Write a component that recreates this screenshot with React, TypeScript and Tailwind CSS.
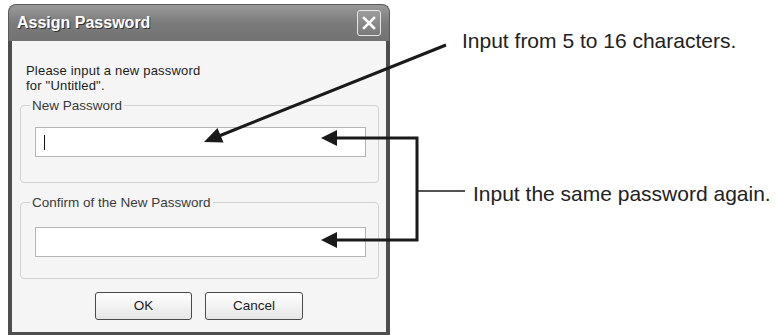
import React from 'react';

const font = { fontFamily: '"Liberation Sans", Arial, sans-serif' };

function GroupBox({ label, inputTop, bottomPad, showCursor, className }: { label: string; inputTop: string; bottomPad: string; showCursor?: boolean; className?: string }) {
  return (
    <div className={`rounded-[4px] border border-[#d2d2d2] pl-[14px] pr-[12px] ${bottomPad} ${className ?? ''}`}>
      <div className="-mt-[8px] ml-[-5px] h-[16px] w-fit bg-[#f5f5f5] px-[2px] text-[13.5px] leading-[16px] text-[#3a3a3a]">
        {label}
      </div>
      <div className={`${inputTop} flex h-[30px] items-center border border-[#b4b4b4] bg-white pl-[8px]`}>
        {showCursor && <div className="h-[15px] w-[1px] bg-[#111]" />}
      </div>
    </div>
  );
}

function Dialog() {
  return (
    <div className="ml-[8px] mt-[4px] flex h-[331px] w-[382px] flex-col">
      {/* Title bar */}
      <div className="flex h-[37px] items-center justify-between rounded-t-[8px] border-x border-t border-[#5a5a5a] bg-gradient-to-b from-[#9a9a9a] via-[#7b7b7b] to-[#727272] pl-[8px] pr-[8px]">
        <span className="text-[16px] font-bold text-white [text-shadow:1px_1px_0_#333]" style={font}>
          Assign Password
        </span>
        <div className="flex h-[26px] w-[24px] items-center justify-center rounded-[3px] border border-[#e6e6e6] bg-gradient-to-b from-[#9c9c9c] to-[#7a7a7a]">
          <svg width="14" height="14" viewBox="0 0 14 14">
            <path d="M2 2 L12 12 M12 2 L2 12" stroke="#fff" strokeWidth="2.6" strokeLinecap="square" />
          </svg>
        </div>
      </div>

      {/* Body */}
      <div className="flex flex-1 flex-col border-x-[4px] border-b-[3px] border-[#4e4e4e] bg-[#f5f5f5] px-[8px] pt-[22px]" style={font}>
        <p className="pl-[6px] text-[13px] leading-[15px] tracking-[0.2px] text-[#1c1c1c]">
          Please input a new password
          <br />
          for "Untitled".
        </p>

        <GroupBox label="New Password" inputTop="mt-[13px]" bottomPad="pb-[25px]" showCursor className="mt-[12px] mr-[-1px]" />
        <GroupBox label="Confirm of the New Password" inputTop="mt-[16px]" bottomPad="pb-[21px]" className="mt-[19px] mr-[-1px]" />

        <div className="mt-[13px] flex justify-center gap-[13px]">
          <button className="h-[28px] w-[97px] rounded-[3px] border border-[#4a4a4a] bg-gradient-to-b from-white to-[#e6e6e6] text-[13.5px] text-[#1c1c1c]">
            OK
          </button>
          <button className="h-[28px] w-[98px] rounded-[3px] border border-[#4a4a4a] bg-gradient-to-b from-white to-[#e6e6e6] text-[13.5px] text-[#1c1c1c]">
            Cancel
          </button>
        </div>
      </div>
    </div>
  );
}

export default function App() {
  return (
    <div className="relative h-[335px] w-[776px] overflow-hidden bg-white">
      <Dialog />

      {/* Callout lines */}
      <svg className="pointer-events-none absolute left-0 top-0" width="776" height="335" viewBox="0 0 776 335">
        <g fill="#1a1a1a" stroke="#1a1a1a">
          <line x1="446" y1="45" x2="219" y2="136" strokeWidth="3" />
          <polygon points="204,142 223.5,142.5 217.5,128" stroke="none" />

          <polyline points="334,138 417,138 417,240 334,240" fill="none" strokeWidth="3" />
          <polygon points="321,138 337,130 337,146" stroke="none" />
          <polygon points="321,240 337,232 337,248" stroke="none" />
          <line x1="417" y1="191" x2="465" y2="191" strokeWidth="1.5" />
        </g>
      </svg>

      <div className="absolute left-[462px] top-[29px] text-[21px] leading-[24px] text-[#222]" style={font}>
        Input from 5 to 16 characters.
      </div>
      <div className="absolute left-[473px] top-[182px] text-[21px] leading-[24px] text-[#222]" style={font}>
        Input the same password again.
      </div>
    </div>
  );
}
